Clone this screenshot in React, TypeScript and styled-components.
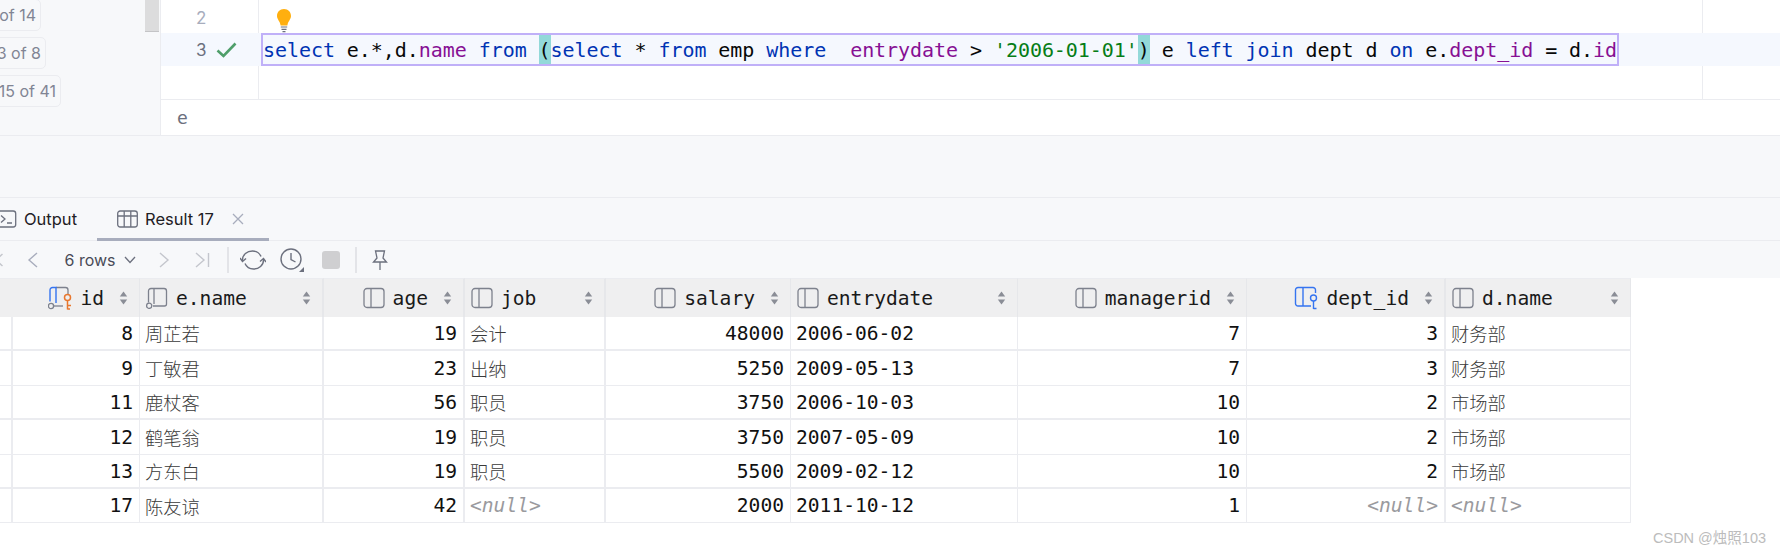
import React from "react";
import styled, { createGlobalStyle } from "styled-components";

const mono = `"DejaVu Sans Mono", "Liberation Mono", "Noto Sans CJK SC", monospace`;
const sans = `Inter, "Noto Sans", sans-serif`;

const Global = createGlobalStyle`
  html, body { margin: 0; padding: 0; background: #fff; }
  #root { width: 1780px; height: 556px; overflow: hidden; }
`;

const Page = styled.div`
  width: 1780px;
  height: 556px;
  background: #fff;
  display: flex;
  flex-direction: column;
  overflow: hidden;
  position: relative;
`;

const EditorArea = styled.div`
  display: flex;
  height: 136px;
  border-bottom: 1px solid #ebecf0;
  box-sizing: border-box;
`;

const Sidebar = styled.div`
  width: 161px;
  flex: none;
  background: #f7f8fa;
  border-right: 1px solid #ebecf0;
  box-sizing: border-box;
  display: flex;
  justify-content: space-between;
  overflow: hidden;
`;

const BadgeList = styled.div`
  display: flex;
  flex-direction: column;
  align-items: flex-start;
  gap: 6px;
  margin-top: -1px;
  margin-left: -24px;
`;

const Badge = styled.div<{ $w: number }>`
  width: ${(p) => p.$w}px;
  height: 32px;
  box-sizing: border-box;
  border: 1px solid #ebecf0;
  border-radius: 5px;
  font: 16px ${sans};
  color: #818594;
  display: flex;
  align-items: center;
  justify-content: flex-end;
  padding-right: 4px;
`;

const Thumb = styled.div`
  width: 14px;
  height: 32px;
  margin-right: 1px;
  background: #dcdcdd;
  border-bottom: 1px solid #c4c4c6;
  box-sizing: border-box;
`;

const EditorMain = styled.div`
  flex: 1;
  display: flex;
  flex-direction: column;
  min-width: 0;
`;

const Lines = styled.div`
  height: 99px;
  border-bottom: 1px solid #ebecf0;
  box-sizing: content-box;
  display: flex;
  flex-direction: column;
  background-image: linear-gradient(#ebecf0, #ebecf0), linear-gradient(#ebecf0, #ebecf0);
  background-size: 1px 100%, 1px 100%;
  background-position: 97px 0, 1541px 0;
  background-repeat: no-repeat;
`;

const LineRow = styled.div<{ $active?: boolean; $h: number }>`
  height: ${(p) => p.$h}px;
  display: flex;
  align-items: center;
  background: ${(p) => (p.$active ? "#f5f8fe" : "transparent")};
`;

const Gutter = styled.div`
  width: 98px;
  flex: none;
  display: flex;
  align-items: center;
  box-sizing: border-box;
  padding-left: 35px;
  gap: 11px;
`;

const LineNo = styled.span<{ $active?: boolean; $low?: boolean }>`
  font: 17px ${sans};
  width: 9px;
  color: ${(p) => (p.$active ? "#6c707e" : "#a8adbd")};
  margin-top: ${(p) => (p.$low ? "2px" : "0")};
`;

const CodeBox = styled.div`
  margin-left: 2px;
  height: 33px;
  box-sizing: border-box;
  border: 2px solid #c0b0f8;
  overflow: hidden;
  font: 20px/31px ${mono};
  color: #080808;
  white-space: pre;
  letter-spacing: -0.06px;
`;

const Kw = styled.span`color: #0033b3;`;
const Field = styled.span`color: #871094;`;
const Str = styled.span`color: #067d17;`;
const Paren = styled.span`
  background: #93d9d9;
  display: inline-block;
  height: 31px;
`;

const BulbWrap = styled.div`
  margin-left: 17px;
  margin-top: 8px;
  height: 26px;
  display: flex;
`;

const HintRow = styled.div`
  height: 35px;
  display: flex;
  align-items: center;
  padding-left: 16px;
  font: 18px ${mono};
  color: #6c707e;
`;

const Band = styled.div`
  height: 61px;
  flex: none;
  background: #f7f8fa;
  border-bottom: 1px solid #ebecf0;
`;

const TabBar = styled.div`
  height: 43px;
  flex: none;
  background: #f7f8fa;
  border-bottom: 1px solid #ebecf0;
  box-sizing: border-box;
  display: flex;
  align-items: stretch;
  position: relative;
`;

const Tab = styled.div<{ $active?: boolean; $w: number; $pl: number }>`
  width: ${(p) => p.$w}px;
  box-sizing: border-box;
  padding-left: ${(p) => p.$pl}px;
  padding-top: 2px;
  display: flex;
  align-items: center;
  font: 16.5px ${sans};
  color: #1f2024;
  border-bottom: 3px solid ${(p) => (p.$active ? "#a8adbd" : "transparent")};
  margin-bottom: -1px;
  gap: 7px;
`;

const Toolbar = styled.div`
  height: 37px;
  flex: none;
  background: #f7f8fa;
  display: flex;
  align-items: center;
  position: relative;
`;

const ToolSlot = styled.div<{ $w: number; $mr?: number }>`
  width: ${(p) => p.$w}px;
  margin-right: ${(p) => p.$mr ?? 0}px;
  flex: none;
  display: flex;
  align-items: center;
  justify-content: center;
`;

const RowsLabel = styled.span`
  font: 16px ${sans};
  color: #494b57;
  display: flex;
  align-items: center;
  gap: 8px;
`;

const Sep = styled.div`
  width: 2px;
  height: 26px;
  background: #e3e4e8;
  flex: none;
`;

const Table = styled.div`
  display: grid;
  width: 1631px;
  grid-template-columns: 12px 128px 184px 141px 141px 185px 227px 229px 199px 185px;
  grid-template-rows: 39px 34px 35px 34px 35px 34px 34px;
`;

const HeadCell = styled.div<{ $right?: boolean; $edge: number }>`
  background: #efeff0;
  border-right: ${(p) => p.$edge}px solid #e6e7ea;
  border-top: 1px solid #ebecf0;
  box-sizing: border-box;
  display: flex;
  align-items: center;
  justify-content: ${(p) => (p.$right ? "flex-end" : "flex-start")};
  padding: 0 11px 0 6px;
  font: 19.6px ${mono};
  color: #1a1a1a;
  position: relative;
`;

const HeadName = styled.span`
  margin-left: 8px;
  margin-right: 15px;
  flex: none;
`;

const SortMark = styled.svg`
  flex: none;
`;

const SortSlot = styled.span<{ $grow?: boolean }>`
  margin-left: ${(p) => (p.$grow ? "auto" : "0")};
  display: flex;
`;

const Cell = styled.div<{ $right?: boolean; $edge: number; $rowEdge: number; $cjk?: boolean; $null?: boolean }>`
  border-right: ${(p) => p.$edge}px solid #ebecf0;
  border-bottom: ${(p) => p.$rowEdge}px solid #ebecf0;
  box-sizing: border-box;
  display: flex;
  align-items: center;
  justify-content: ${(p) => (p.$right ? "flex-end" : "flex-start")};
  padding: 0 6px 0 5px;
  white-space: pre;
  overflow: hidden;
  color: ${(p) => (p.$null ? "#9a9a9e" : p.$cjk ? "#3a3a3a" : "#111")};
  font-style: ${(p) => (p.$null ? "italic" : "normal")};
  font-family: ${(p) => (p.$cjk ? `"Noto Sans CJK SC", sans-serif` : mono)};
  font-size: ${(p) => (p.$cjk ? "18.3px" : "19.6px")};
  font-weight: ${(p) => (p.$cjk ? 300 : 400)};
`;

const Watermark = styled.div`
  position: absolute;
  left: 1653px;
  top: 528px;
  font: 14.5px/20px "Liberation Sans", "Noto Sans CJK SC", sans-serif;
  color: #bcbcbc;
  white-space: nowrap;
`;

const Sort = () => (
  <SortMark width="9" height="14" viewBox="0 0 9 14">
    <path d="M4.5 0.5 L8.2 5.5 H0.8 Z" fill="#8a8d96" />
    <path d="M4.5 13.5 L8.2 8.5 H0.8 Z" fill="#8a8d96" />
  </SortMark>
);

type IconKind = "plain" | "pkkey" | "fkkey" | "notnull";

const ColIcon = ({ kind }: { kind: IconKind }) => {
  const gray = "#7d818d";
  const blue = "#3574f0";
  const orange = "#e8772e";
  if (kind === "plain")
    return (
      <svg width="22" height="22" viewBox="0 0 22 22" fill="none">
        <rect x="1" y="1.5" width="20" height="19" rx="3" stroke={gray} strokeWidth="1.3" />
        <path d="M8 1.5 V20.5" stroke={gray} strokeWidth="1.3" />
      </svg>
    );
  if (kind === "notnull")
    return (
      <svg width="22" height="22" viewBox="0 0 22 22" fill="none">
        <path d="M2.5 15.5 V4 a2.5 2.5 0 0 1 2.5 -2.5 H18 a2.5 2.5 0 0 1 2.5 2.5 V17 a2 2 0 0 1 -2 2 H7" stroke={gray} strokeWidth="1.3" />
        <path d="M8 1.5 V17" stroke={gray} strokeWidth="1.3" />
        <circle cx="3.2" cy="18.8" r="2.6" stroke={gray} strokeWidth="1.3" />
      </svg>
    );
  if (kind === "pkkey")
    return (
      <svg width="24" height="24" viewBox="0 0 24 24" fill="none">
        <path d="M8 1.5 H17.5 a2.5 2.5 0 0 1 2.5 2.5 V8" stroke={gray} strokeWidth="1.3" />
        <path d="M2 15.5 V4 a2.5 2.5 0 0 1 2.5 -2.5 H8 V17" stroke={blue} strokeWidth="1.4" />
        <path d="M6 20 H15" stroke={gray} strokeWidth="1.3" />
        <circle cx="3" cy="20" r="2.6" stroke={gray} strokeWidth="1.3" />
        <circle cx="19.5" cy="11.5" r="3" stroke={orange} strokeWidth="1.5" />
        <path d="M19.5 14.5 V23.5 M19.5 19.5 H23 M19.5 23 H22" stroke={orange} strokeWidth="1.5" />
      </svg>
    );
  return (
    <svg width="24" height="24" viewBox="0 0 24 24" fill="none">
      <path d="M17 20 H4 a2.5 2.5 0 0 1 -2.5 -2.5 V4 a2.5 2.5 0 0 1 2.5 -2.5 H19 a2.5 2.5 0 0 1 2.5 2.5 V7" stroke={blue} strokeWidth="1.4" />
      <path d="M9 1.5 V20" stroke={blue} strokeWidth="1.4" />
      <circle cx="19.5" cy="12" r="3" stroke={blue} strokeWidth="1.4" />
      <path d="M19.5 15 V23 M19.5 22.5 H22.5" stroke={blue} strokeWidth="1.4" />
    </svg>
  );
};

type Col = { name: string; right: boolean; icon: IconKind; edge: number };

const cols: Col[] = [
  { name: "id", right: true, icon: "pkkey", edge: 1 },
  { name: "e.name", right: false, icon: "notnull", edge: 2 },
  { name: "age", right: true, icon: "plain", edge: 2 },
  { name: "job", right: false, icon: "plain", edge: 2 },
  { name: "salary", right: true, icon: "plain", edge: 1 },
  { name: "entrydate", right: false, icon: "plain", edge: 1 },
  { name: "managerid", right: true, icon: "plain", edge: 1 },
  { name: "dept_id", right: true, icon: "fkkey", edge: 2 },
  { name: "d.name", right: false, icon: "plain", edge: 1 },
];

const N = "<null>";
const rows: string[][] = [
  ["8", "周芷若", "19", "会计", "48000", "2006-06-02", "7", "3", "财务部"],
  ["9", "丁敏君", "23", "出纳", "5250", "2009-05-13", "7", "3", "财务部"],
  ["11", "鹿杖客", "56", "职员", "3750", "2006-10-03", "10", "2", "市场部"],
  ["12", "鹤笔翁", "19", "职员", "3750", "2007-05-09", "10", "2", "市场部"],
  ["13", "方东白", "19", "职员", "5500", "2009-02-12", "10", "2", "市场部"],
  ["17", "陈友谅", "42", N, "2000", "2011-10-12", "1", N, N],
];
const rowEdges = [2, 1, 2, 1, 2, 1];
const cjkCols = new Set([1, 3, 8]);

const Chevron = ({ dir, color }: { dir: "l" | "r"; color: string }) => (
  <svg width="12" height="18" viewBox="0 0 12 18" fill="none">
    <path d={dir === "l" ? "M10 2 L2 9 L10 16" : "M2 2 L10 9 L2 16"} stroke={color} strokeWidth="1.4" />
  </svg>
);

export default function App() {
  return (
    <Page>
      <Global />
      <EditorArea>
        <Sidebar>
          <BadgeList>
            <Badge $w={65}>of 14</Badge>
            <Badge $w={70}>3 of 8</Badge>
            <Badge $w={85}>15 of 41</Badge>
          </BadgeList>
          <Thumb />
        </Sidebar>
        <EditorMain>
          <Lines>
            <LineRow $h={33}>
              <Gutter>
                <LineNo $low>2</LineNo>
              </Gutter>
              <BulbWrap>
                <svg width="16" height="26" viewBox="0 0 16 26">
                  <path d="M8 1 C3.8 1 1 4 1 8 C1 11.5 4 13 4.6 17.5 H11.4 C12 13 15 11.5 15 8 C15 4 12.2 1 8 1 Z" fill="#ffaf0f" />
                  <path d="M4.8 19 H11.2 M5.5 21.3 H10.5 M6.5 23.6 H9.5" stroke="#6c707e" strokeWidth="1.2" />
                </svg>
              </BulbWrap>
            </LineRow>
            <LineRow $h={33} $active>
              <Gutter>
                <LineNo $active>3</LineNo>
                <svg width="21" height="16" viewBox="0 0 21 16" fill="none">
                  <path d="M1.5 8.5 L7.5 14 L19.5 1.5" stroke="#4f9e6a" strokeWidth="2.6" />
                </svg>
              </Gutter>
              <CodeBox>
                <Kw>select</Kw>{" e.*,d."}<Field>name</Field>{" "}<Kw>from</Kw>{" "}<Paren>(</Paren>
                <Kw>select</Kw>{" * "}<Kw>from</Kw>{" emp "}<Kw>where</Kw>{"  "}<Field>entrydate</Field>{" > "}
                <Str>'2006-01-01'</Str><Paren>)</Paren>{" e "}<Kw>left join</Kw>{" dept d "}<Kw>on</Kw>{" e."}
                <Field>dept_id</Field>{" = d."}<Field>id</Field>
              </CodeBox>
            </LineRow>
          </Lines>
          <HintRow>e</HintRow>
        </EditorMain>
      </EditorArea>
      <Band />
      <TabBar>
        <Tab $w={97} $pl={0}>
          <svg width="20" height="18" viewBox="0 0 20 18" fill="none" style={{ marginLeft: -3 }}>
            <rect x="0.7" y="1" width="18" height="16" rx="2.5" stroke="#6c707e" strokeWidth="1.3" />
            <path d="M4 5.5 L8 9 L4 12.5 M10 13 H15" stroke="#6c707e" strokeWidth="1.3" />
          </svg>
          Output
        </Tab>
        <Tab $w={172} $pl={20} $active>
          <svg width="21" height="18" viewBox="0 0 21 18" fill="none">
            <rect x="0.7" y="1" width="19.6" height="16" rx="2.5" stroke="#6c707e" strokeWidth="1.3" />
            <path d="M0.7 6 H20.3 M7.2 1 V17 M13.8 1 V17" stroke="#6c707e" strokeWidth="1.3" />
          </svg>
          Result 17
          <svg width="12" height="12" viewBox="0 0 12 12" fill="none" style={{ marginLeft: 11 }}>
            <path d="M1 1 L11 11 M11 1 L1 11" stroke="#a8adbd" strokeWidth="1.3" />
          </svg>
        </Tab>
      </TabBar>
      <Toolbar>
        <svg width="4" height="18" viewBox="0 0 4 18" fill="none">
          <path d="M-4 9 L2.5 3 M-4 9 L2.5 15" stroke="#c4c6cd" strokeWidth="1.4" />
        </svg>
        <ToolSlot $w={58}>
          <Chevron dir="l" color="#a8adbd" />
        </ToolSlot>
        <ToolSlot $w={76}>
          <RowsLabel>
            6 rows
            <svg width="12" height="8" viewBox="0 0 12 8" fill="none">
              <path d="M1 1 L6 6.5 L11 1" stroke="#6c707e" strokeWidth="1.3" />
            </svg>
          </RowsLabel>
        </ToolSlot>
        <ToolSlot $w={52}>
          <Chevron dir="r" color="#c4c6cd" />
        </ToolSlot>
        <ToolSlot $w={25} $mr={12}>
          <svg width="15" height="18" viewBox="0 0 15 18" fill="none">
            <path d="M1 2 L9 9 L1 16 M13.5 2 V16" stroke="#c4c6cd" strokeWidth="1.4" />
          </svg>
        </ToolSlot>
        <Sep />
        <ToolSlot $w={48}>
          <svg width="26" height="22" viewBox="0 0 26 22" fill="none">
            <path d="M2.5 11 C2.5 5.5 7 2 12.5 2 C16.5 2 19.5 4 21 7.5 M23.5 11 C23.5 16.5 19 20 13.5 20 C9.5 20 6.5 18 5 14.5" stroke="#6c707e" strokeWidth="1.4" />
            <path d="M0 9 L2.5 12.5 L6 9.5 M20 12.5 L23.5 9.5 L26 13" stroke="#6c707e" strokeWidth="1.4" />
          </svg>
        </ToolSlot>
        <ToolSlot $w={30}>
          <svg width="26" height="26" viewBox="0 0 26 26" fill="none">
            <circle cx="12" cy="12" r="10" stroke="#6c707e" strokeWidth="1.4" />
            <path d="M12 6 V12.5 L16.5 15" stroke="#6c707e" strokeWidth="1.4" />
            <path d="M25 20 V25 H20 Z" fill="#6c707e" />
          </svg>
        </ToolSlot>
        <ToolSlot $w={48}>
          <svg width="18" height="18" viewBox="0 0 18 18">
            <rect width="18" height="18" rx="3" fill="#cfcfd1" />
          </svg>
        </ToolSlot>
        <Sep />
        <ToolSlot $w={46}>
          <svg width="16" height="20" viewBox="0 0 16 20" fill="none">
            <path d="M3.5 1 H12.5 L11 8 L14.5 12 H1.5 L5 8 Z M8 12 V20" stroke="#6c707e" strokeWidth="1.3" />
          </svg>
        </ToolSlot>
      </Toolbar>
      <Table>
        <HeadCell $edge={2} />
        {cols.map((c) => (
          <HeadCell key={c.name} $right={c.right} $edge={c.edge}>
            <ColIcon kind={c.icon} />
            <HeadName>{c.name}</HeadName>
            <SortSlot $grow={!c.right}>
              <Sort />
            </SortSlot>
          </HeadCell>
        ))}
        {rows.map((r, i) => (
          <React.Fragment key={i}>
            <Cell $edge={2} $rowEdge={rowEdges[i]} />
            {r.map((v, j) => (
              <Cell
                key={j}
                $right={cols[j].right}
                $edge={cols[j].edge}
                $rowEdge={rowEdges[i]}
                $null={v === N}
                $cjk={cjkCols.has(j) && v !== N}
              >
                {v}
              </Cell>
            ))}
          </React.Fragment>
        ))}
      </Table>
      <Watermark>CSDN @烛照103</Watermark>
    </Page>
  );
}
